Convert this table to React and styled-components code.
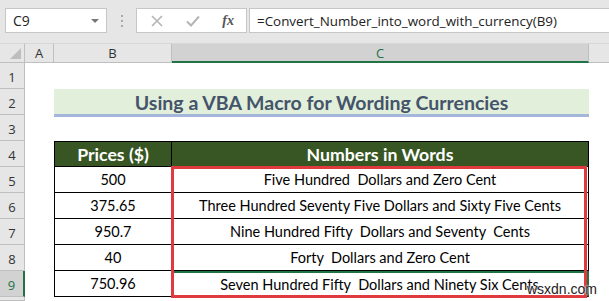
import React from "react";
import styled, { createGlobalStyle, css } from "styled-components";

const GlobalStyle = createGlobalStyle`
  html, body {
    margin: 0;
    padding: 0;
    background: #ffffff;
  }
  body {
    width: 609px;
    height: 301px;
    overflow: hidden;
  }
`;

const COLORS = {
  chrome: "#e6e6e6",
  chromeLine: "#c6c6c6",
  headerLine: "#bfbfbf",
  selected: "#d2d2d2",
  excelGreen: "#217346",
  tableHead: "#375623",
  titleBg: "#e2efda",
  titleLine: "#a4b6d9",
  titleText: "#44546a",
  red: "#e0393e",
};

const Page = styled.div`
  position: relative;
  width: 609px;
  height: 301px;
  overflow: hidden;
  background: #fff;
`;

const Toolbar = styled.div`
  display: flex;
  align-items: center;
  height: 43px;
  padding: 0 0 2px 5px;
  box-sizing: border-box;
  background: ${COLORS.chrome};
  font-family: "Open Sans", "Noto Sans", sans-serif;
  font-size: 14px;
  color: #222;
`;

const Box = styled.div`
  display: flex;
  align-items: center;
  height: 25px;
  box-sizing: border-box;
  background: #fff;
  border: 1px solid ${COLORS.chromeLine};
`;

const NameBox = styled(Box)`
  width: 102px;
  padding: 0 7px;
  justify-content: space-between;
`;

const Caret = styled.span`
  width: 0;
  height: 0;
  border-left: 4px solid transparent;
  border-right: 4px solid transparent;
  border-top: 4px solid #777;
`;

const Grip = styled.div`
  display: flex;
  flex-direction: column;
  gap: 3px;
  margin: 0 13px 0 14px;
  span {
    width: 2px;
    height: 2px;
    background: #a8a8a8;
  }
`;

const FxBox = styled(Box)`
  width: 111px;
  padding: 0 12px 0 14px;
  justify-content: space-between;
  margin-right: 2px;
`;

const Fx = styled.span`
  font-family: "Liberation Serif", serif;
  font-style: italic;
  font-weight: bold;
  font-size: 14px;
  color: #555;
`;

const FormulaBox = styled(Box)`
  flex: 1;
  padding-left: 7px;
  border-right: none;
  white-space: nowrap;
  overflow: hidden;
  font-size: 13.4px;
`;

const Sheet = styled.div`
  position: relative;
  display: grid;
  grid-template-columns: 25px 29px 118px 417px 1fr;
  grid-template-rows: 20px repeat(9, 26px) 1fr;
  height: 258px;
`;

const Corner = styled.div`
  background: ${COLORS.chrome};
  border-right: 1px solid ${COLORS.headerLine};
  border-bottom: 1px solid ${COLORS.headerLine};
  border-top: 1px solid #d8d8d8;
  position: relative;
  overflow: hidden;
  &::after {
    content: "";
    position: absolute;
    right: 3px;
    bottom: 3px;
    border-left: 11px solid transparent;
    border-bottom: 11px solid #bdbdbd;
  }
`;

const ColHead = styled.div`
  display: flex;
  align-items: center;
  justify-content: center;
  box-sizing: border-box;
  background: ${(p) => (p.$active ? COLORS.selected : COLORS.chrome)};
  border-top: 1px solid #d8d8d8;
  border-right: 1px solid ${COLORS.headerLine};
  border-bottom: ${(p) =>
    p.$active ? `2px solid ${COLORS.excelGreen}` : `1px solid ${COLORS.headerLine}`};
  font-family: "Open Sans", "Noto Sans", sans-serif;
  font-size: 13px;
  color: ${(p) => (p.$active ? COLORS.excelGreen : "#333")};
  ${(p) =>
    p.$filler &&
    css`
      border-right: none;
    `}
`;

const RowHead = styled.div`
  display: flex;
  align-items: center;
  justify-content: center;
  padding-top: 2px;
  box-sizing: border-box;
  background: ${(p) => (p.$active ? COLORS.selected : COLORS.chrome)};
  border-bottom: 1px solid ${COLORS.headerLine};
  border-right: ${(p) =>
    p.$active ? `2px solid ${COLORS.excelGreen}` : `1px solid ${COLORS.headerLine}`};
  font-family: "Open Sans", "Noto Sans", sans-serif;
  font-size: 13px;
  color: ${(p) => (p.$active ? COLORS.excelGreen : "#333")};
`;

const Blank = styled.div`
  grid-column: ${(p) => p.$span || "auto"};
`;

const Title = styled.div`
  grid-column: span 2;
  display: flex;
  align-items: center;
  justify-content: center;
  box-sizing: border-box;
  margin-bottom: -2px;
  background: ${COLORS.titleBg};
  border-bottom: 3px solid ${COLORS.titleLine};
  padding-top: 2px;
  font-family: Lato, "Noto Sans", sans-serif;
  font-weight: bold;
  font-size: 19.5px;
  color: ${COLORS.titleText};
  white-space: nowrap;
`;

const Cell = styled.div`
  display: flex;
  align-items: center;
  justify-content: center;
  box-sizing: border-box;
  border-right: 1px solid #000;
  border-bottom: 1px solid #000;
  border-left: ${(p) => (p.$first ? "1px solid #000" : "none")};
  font-family: Lato, "Noto Sans", sans-serif;
  font-size: 14.5px;
  color: #000;
  white-space: nowrap;
  ${(p) =>
    p.$head &&
    css`
      border-top: 1px solid #000;
      background: ${COLORS.tableHead};
      color: #fff;
      font-weight: bold;
      font-size: 17.7px;
    `}
  ${(p) =>
    p.$current &&
    css`
      border-top: 2px solid ${COLORS.excelGreen};
      border-right: 2px solid ${COLORS.excelGreen};
    `}
`;

/* red marker drawn over C5:C9; absolute inside its own grid area */
const Highlight = styled.div`
  position: absolute;
  grid-column: 4 / 5;
  grid-row: 6 / 11;
  inset: -1px 2px -1px -1px;
  border: 3px solid ${COLORS.red};
  pointer-events: none;
`;

const Watermark = styled.div`
  position: absolute;
  right: 12px;
  bottom: 4px;
  font-family: "Liberation Sans", Arial, sans-serif;
  font-size: 14px;
  color: #222;
  text-shadow: 0 0 2px #fff, 0 0 2px #fff;
`;

const rows = [
  { price: "500", words: "Five Hundred\u00a0 Dollars and Zero Cent" },
  { price: "375.65", words: "Three Hundred Seventy Five Dollars and Sixty Five Cents" },
  { price: "950.7", words: "Nine Hundred Fifty\u00a0 Dollars and Seventy\u00a0 Cents" },
  { price: "40", words: "Forty\u00a0 Dollars and Zero Cent" },
  { price: "750.96", words: "Seven Hundred Fifty\u00a0 Dollars and Ninety Six Cents" },
];

const App = () => {
  return (
    <Page>
      <GlobalStyle />
      <Toolbar>
        <NameBox>
          <span>C9</span>
          <Caret />
        </NameBox>
        <Grip>
          <span />
          <span />
          <span />
        </Grip>
        <FxBox>
          <svg width="12" height="12" viewBox="0 0 12 12">
            <path d="M1 1 L11 11 M11 1 L1 11" stroke="#b5b5b5" strokeWidth="1.6" fill="none" />
          </svg>
          <svg width="14" height="12" viewBox="0 0 14 12">
            <path d="M1 6.5 L5 10.5 L13 1.5" stroke="#b5b5b5" strokeWidth="2" fill="none" />
          </svg>
          <Fx>fx</Fx>
        </FxBox>
        <FormulaBox>=Convert_Number_into_word_with_currency(B9)</FormulaBox>
      </Toolbar>

      <Sheet>
        <Corner />
        <ColHead>A</ColHead>
        <ColHead>B</ColHead>
        <ColHead $active>C</ColHead>
        <ColHead $filler />

        <RowHead>1</RowHead>
        <Blank $span="span 4" />

        <RowHead>2</RowHead>
        <Blank />
        <Title>Using a VBA Macro for Wording Currencies</Title>
        <Blank />

        <RowHead>3</RowHead>
        <Blank $span="span 4" />

        <RowHead>4</RowHead>
        <Blank />
        <Cell $head $first>Prices ($)</Cell>
        <Cell $head>Numbers in Words</Cell>
        <Blank />

        {rows.map((r, i) => (
          <React.Fragment key={r.price}>
            <RowHead $active={i === rows.length - 1}>{i + 5}</RowHead>
            <Blank />
            <Cell $first>{r.price}</Cell>
            <Cell $current={i === rows.length - 1}>{r.words}</Cell>
            <Blank />
          </React.Fragment>
        ))}

        <RowHead />
        <Blank $span="span 4" />

        <Highlight />
      </Sheet>
      <Watermark>wsxdn.com</Watermark>
    </Page>
  );
};

export default App;
